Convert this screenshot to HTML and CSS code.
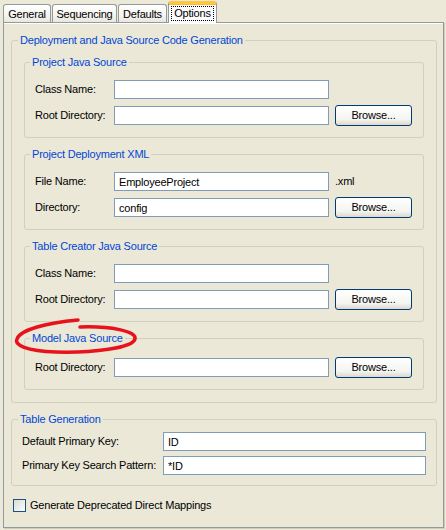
FILE: index.html
```html
<!DOCTYPE html>
<html lang="en">
<head>
    <meta charset="UTF-8">
    <title>Options</title>
    <link rel="stylesheet" href="styles.css">
</head>
<body>
<div class="dialog">
    <div class="tabs">
        <div class="tab tab-general">General</div>
        <div class="tab tab-seq">Sequencing</div>
        <div class="tab tab-defaults">Defaults</div>
        <div class="tab tab-options active"><span class="focus">Options</span></div>
    </div>

    <div class="pane">
        <!-- deployment + java source -->
        <fieldset class="group">
            <legend>Deployment and Java Source Code Generation</legend>
            <div class="group-body outer">
                <fieldset class="group sub">
                    <legend>Project Java Source</legend>
                    <div class="group-body">
                        <div class="row"><label>Class Name:</label><input class="field" type="text"></div>
                        <div class="row"><label>Root Directory:</label><input class="field" type="text"><button class="btn">Browse...</button></div>
                    </div>
                </fieldset>

                <fieldset class="group sub">
                    <legend>Project Deployment XML</legend>
                    <div class="group-body">
                        <div class="row"><label>File Name:</label><input class="field" type="text" value="EmployeeProject"><span class="suffix">.xml</span></div>
                        <div class="row"><label>Directory:</label><input class="field" type="text" value="config"><button class="btn">Browse...</button></div>
                    </div>
                </fieldset>

                <fieldset class="group sub">
                    <legend>Table Creator Java Source</legend>
                    <div class="group-body">
                        <div class="row"><label>Class Name:</label><input class="field" type="text"></div>
                        <div class="row"><label>Root Directory:</label><input class="field" type="text"><button class="btn">Browse...</button></div>
                    </div>
                </fieldset>

                <fieldset class="group sub model">
                    <legend>Model Java Source</legend>
                    <div class="group-body">
                        <div class="row"><label>Root Directory:</label><input class="field" type="text"><button class="btn">Browse...</button></div>
                    </div>
                </fieldset>
            </div>
        </fieldset>

        <!-- table generation -->
        <fieldset class="group table-gen">
            <legend>Table Generation</legend>
            <div class="group-body">
                <div class="row"><label>Default Primary Key:</label><input class="field" type="text" value="ID"></div>
                <div class="row"><label>Primary Key Search Pattern:</label><input class="field" type="text" value="*ID"></div>
            </div>
        </fieldset>

        <label class="check"><span class="box"></span>Generate Deprecated Direct Mappings</label>

        <!-- red marker round the model group title -->
        <svg class="marker" width="130" height="42" viewBox="0 0 130 42">
            <path d="M68 11 C98 10 125 15 123 23 C121 32 80 37 44 36 C14 35 2 29 5 23 C8 14 33 7 66 4" fill="none" stroke="#e8121a" stroke-width="3.5" stroke-linecap="round"/>
        </svg>
    </div>
</div>
</body>
</html>
```

FILE: styles.css
```css
* {
    box-sizing: border-box;
}
body {
    margin: 0;
    background-color: #ece9d8;
    font-family: "Liberation Sans", Arial, sans-serif;
    font-size: 11px;
    line-height: 13px;
    letter-spacing: -0.2px;
    color: #000;
}
.dialog {
    width: 446px;
    height: 530px;
    padding: 0 2px 0 3px;
    background-color: #ece9d8;
}

/* tabs */
.tabs {
    display: flex;
    align-items: flex-end;
    height: 22px;
}
.tab {
    height: 18px;
    margin-right: 1px;
    padding-top: 3px;
    text-align: center;
    border: 1px solid #919b9c;
    border-bottom: none;
    border-radius: 3px 3px 0 0;
    background: linear-gradient(#ffffff, #f5f4ef 60%, #e9e7df);
}
.tab-general { width: 48px; }
.tab-seq { width: 65px; }
.tab-defaults { width: 49px; }
.tab-options { width: 49px; }
.tab.active {
    position: relative;
    z-index: 1;
    height: 22px;
    margin-bottom: -1px;
    padding-top: 2px;
    border-top: 3px solid #ffc73c;
    background: #fcfcfe;
    box-shadow: inset 0 1px 0 #ffb53c;
}
.focus {
    display: inline-block;
    padding: 0 2px;
    border: 1px dotted #000;
}

/* tab pane */
.pane {
    position: relative;
    width: 441px;
    height: 506px;
    padding: 11px 6px 0 7px;
    border: 1px solid #919b9c;
    box-shadow: 1px 1px 0 #cfccbd, inset 0 1px 0 #fff;
    background-color: #ebe8d8;
}

/* group boxes */
.group {
    min-width: 0;
    margin: 0;
    padding: 0;
    border: 1px solid #d0d0bf;
    border-radius: 3px;
}
.group legend {
    margin-left: 6px;
    padding: 0 2px;
    color: #0046d5;
}
.group.sub legend {
    margin-left: 5px;
}
.group-body {
    padding: 10px 10px 11px;
}
.group-body.outer {
    padding: 9px 12px 12px;
}
.sub + .sub {
    margin-top: 10px;
}
.group.model .group-body {
    padding-top: 12px;
}

/* form rows */
.row {
    display: flex;
    align-items: center;
    height: 21px;
}
.row + .row {
    margin-top: 5px;
}
.row label {
    width: 79px;
    flex-shrink: 0;
}
.field {
    width: 215px;
    height: 19px;
    margin: 0;
    padding: 0 4px;
    border: 1px solid #7f9db9;
    background: #fff;
    font: inherit;
    letter-spacing: inherit;
    color: #000;
    outline: none;
}
.suffix {
    margin-left: 6px;
}
.btn {
    width: 77px;
    height: 21px;
    margin: 0 0 0 6px;
    padding: 0;
    border: 1px solid #003c74;
    border-radius: 3px;
    background: linear-gradient(#ffffff, #f4f4f0 70%, #dcd8cc);
    font: inherit;
    letter-spacing: inherit;
    color: #000;
}

/* table generation */
.table-gen {
    margin-top: 10px;
}
.table-gen .group-body {
    padding: 6px 10px 10px;
}
.table-gen .row {
    height: 19px;
}
.table-gen .row label {
    width: 141px;
}
.table-gen .field {
    width: 263px;
}

/* checkbox */
.check {
    display: flex;
    align-items: center;
    margin: 13px 0 0 2px;
}
.box {
    width: 13px;
    height: 13px;
    margin-right: 4px;
    border: 1px solid #1c5180;
    background: linear-gradient(135deg, #dcdcd7, #fbfbf9);
}

.marker {
    position: absolute;
    left: 8px;
    top: 293px;
}
```
